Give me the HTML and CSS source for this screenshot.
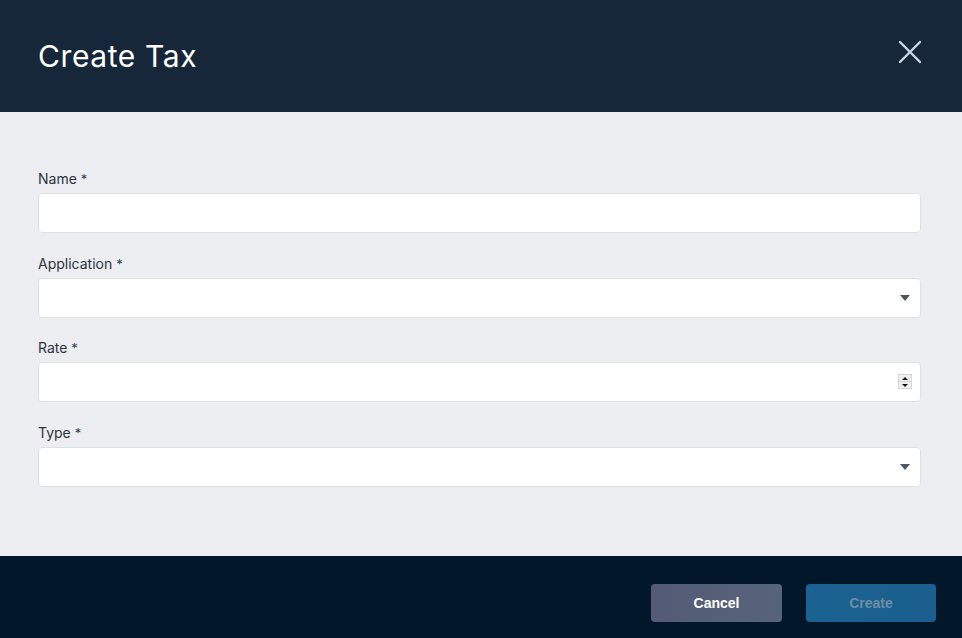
FILE: index.html
```html
<!DOCTYPE html>
<html lang="en">
<head>
  <meta charset="UTF-8" />
  <title>Create Tax</title>
  <link rel="stylesheet" href="styles.css">
</head>
<body>
  <div class="modal">
    <!-- Header -->
    <div class="modal-header">
      <h1>Create Tax</h1>
      <button class="close-btn" aria-label="Close">
        <svg width="24" height="24" viewBox="0 0 24 24">
          <path d="M2 2 L22 22 M22 2 L2 22" stroke="#c9d6e4" stroke-width="2.4" stroke-linecap="round" />
        </svg>
      </button>
    </div>

    <!-- Form -->
    <div class="modal-body">
      <div class="field">
        <label>Name <span class="req">*</span></label>
        <div class="input"></div>
      </div>
      <div class="field">
        <label>Application <span class="req">*</span></label>
        <div class="input select"><span class="caret"></span></div>
      </div>
      <div class="field">
        <label>Rate <span class="req">*</span></label>
        <div class="input">
          <span class="spinner">
            <span class="spin up"></span>
            <span class="spin down"></span>
          </span>
        </div>
      </div>
      <div class="field">
        <label>Type <span class="req">*</span></label>
        <div class="input select"><span class="caret"></span></div>
      </div>
    </div>

    <!-- Footer -->
    <div class="modal-footer">
      <button class="btn btn-cancel">Cancel</button>
      <button class="btn btn-create">Create</button>
    </div>
  </div>
</body>
</html>
```

FILE: styles.css
```css
body {
  margin: 0;
  font-family: 'Inter', 'Noto Sans', sans-serif;
  background: #eceef2;
}

.modal {
  width: 962px;
  height: 638px;
  display: flex;
  flex-direction: column;
}

.modal-header {
  height: 112px;
  background: #17273a;
  display: flex;
  align-items: center;
  justify-content: space-between;
  padding: 0 40px 0 38px;
  box-sizing: border-box;
}

.modal-header h1 {
  margin: 0;
  color: #ffffff;
  font-family: 'Inter', sans-serif;
  font-size: 30px;
  font-weight: 400;
  letter-spacing: 0.6px;
}

.close-btn {
  background: none;
  border: none;
  padding: 0;
  margin-top: -8px;
  cursor: pointer;
  display: flex;
}

.modal-body {
  flex: 1;
  background: #eceef2;
  padding: 56px 41px 0 38px;
}

.field {
  margin-bottom: 19.5px;
}

.field label {
  display: block;
  height: 21px;
  font-size: 14px;
  line-height: 21px;
  color: #2d3440;
  margin-bottom: 4px;
}

.req {
  color: #34405a;
  font-size: 13px;
  line-height: 0;
}

.input {
  height: 40px;
  box-sizing: border-box;
  background: #ffffff;
  border: 1px solid #dde1e7;
  border-radius: 4px;
  position: relative;
}

.caret {
  position: absolute;
  right: 10px;
  top: 16px;
  width: 0;
  height: 0;
  border-left: 5px solid transparent;
  border-right: 5px solid transparent;
  border-top: 6px solid #4f5663;
}

.spinner {
  position: absolute;
  right: 8px;
  top: 11px;
  width: 14px;
  height: 15px;
  background: #d6d6d6;
  display: flex;
  flex-direction: column;
  gap: 1px;
  padding: 1px;
  box-sizing: border-box;
}

.spin {
  flex: 1;
  background: #efefef;
  position: relative;
}

.spin::after {
  content: '';
  position: absolute;
  left: 3px;
  width: 0;
  height: 0;
  border-left: 3px solid transparent;
  border-right: 3px solid transparent;
}

.spin.up::after {
  top: 2px;
  border-bottom: 3px solid #111;
}

.spin.down::after {
  top: 2px;
  border-top: 3px solid #111;
}

.modal-footer {
  height: 82px;
  background: #03172a;
  display: flex;
  justify-content: flex-end;
  align-items: flex-start;
  gap: 24px;
  padding: 28px 26px 0 0;
  box-sizing: border-box;
}

.btn {
  height: 38px;
  border: none;
  border-radius: 4px;
  font-family: 'Liberation Sans', Arial, sans-serif;
  font-size: 14px;
  font-weight: bold;
  cursor: pointer;
}

.btn-cancel {
  width: 131px;
  color: #ffffff;
  background: linear-gradient(90deg, #545a76, #566479);
}

.btn-create {
  width: 130px;
  color: #6f8ea6;
  background: linear-gradient(90deg, #1a6291, #1a5f8e);
}
```
